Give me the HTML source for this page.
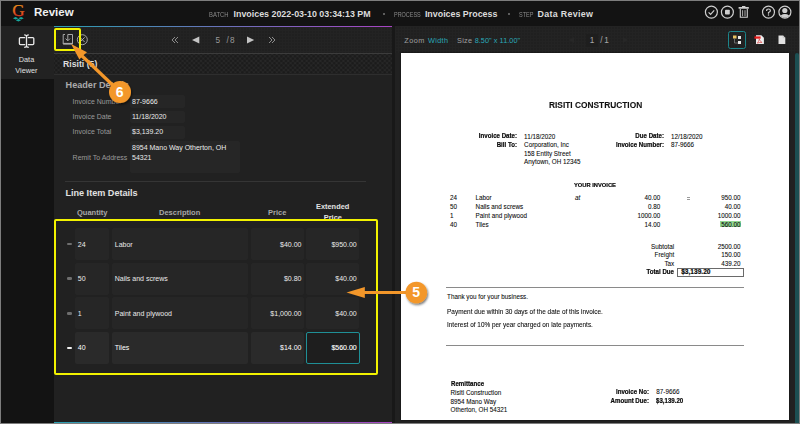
<!DOCTYPE html>
<html><head><meta charset="utf-8">
<style>
*{margin:0;padding:0;box-sizing:border-box}
html,body{width:800px;height:424px;overflow:hidden;background:#7d7d7d}
body{position:relative;font-family:"Liberation Sans",sans-serif}
.a{position:absolute}
.t{position:absolute;white-space:pre;line-height:1;transform-origin:0 0}
.b{font-weight:bold}
#top{left:1px;top:1px;width:798px;height:25px;background:#131313}
#side{left:1px;top:26px;width:53px;height:397px;background:#131313}
#sideitem{left:1px;top:26px;width:53px;height:53px;background:#222}
#lp{left:54px;top:26px;width:338px;height:397px;background:#212121}
#tb{left:54px;top:27px;width:338px;height:26px;background-color:#202020;
 background-image:linear-gradient(#232323 1px,transparent 1px),linear-gradient(90deg,#232323 1px,transparent 1px);background-size:3px 3px}
#sep{left:392px;top:26px;width:3px;height:397px;background:#181818}
#rp{left:395px;top:26px;width:404px;height:397px;background:#212121}
#rtb{left:395px;top:26px;width:404px;height:27px;background-color:#202020;
 background-image:linear-gradient(#232323 1px,transparent 1px),linear-gradient(90deg,#232323 1px,transparent 1px);background-size:3px 3px}
#page{left:401px;top:53px;width:388px;height:367px;background:#fff;box-shadow:0 0 1.5px #0a0a0a}
#scroll{left:795px;top:53px;width:4px;height:370px;background:#1c4f52;border-radius:2px 2px 0 0}
.grad{height:1px;background:linear-gradient(90deg,#2a9fb0,#a844c4)}
.dk{-webkit-text-stroke:0.12px #0a0a0a}
#chk{left:54px;top:54px;width:338px;height:20px;background-color:#292929;
 background-image:radial-gradient(circle,#1b1b1b 0.9px,transparent 1.9px),radial-gradient(circle,#1b1b1b 0.9px,transparent 1.9px);
 background-size:4.6px 4.6px;background-position:0 0,2.3px 2.3px}
.lbl{color:#9a9a9a;font-size:7px}
.val{color:#ebebeb;font-size:7px}
.box{position:absolute;background:#262626;border-radius:2px}
.cell{position:absolute;background:#262626;border-radius:2px;height:32px}
.hdl{position:absolute;width:5.5px;height:2.5px;border-radius:1.2px;background:#6e6e6e}
.d{color:#222;font-size:6.2px}
.db{color:#111;font-size:6.2px;font-weight:bold}
.sc{}
</style></head><body>
<div id="top" class="a"></div>
<div id="side" class="a"></div>
<div id="sideitem" class="a"></div>
<div id="lp" class="a"></div>
<div id="tb" class="a"></div>
<div class="a grad" style="left:54px;top:26px;width:338px"></div>
<div class="a" style="left:54px;top:53px;width:338px;height:1px;background:#3c3c3c"></div>
<div id="chk" class="a"></div>
<div class="a" style="left:54px;top:74px;width:338px;height:1px;background:#2e2e2e"></div>
<div class="a grad" style="left:54px;top:422px;width:338px"></div>
<div id="sep" class="a"></div>
<div id="rp" class="a"></div>
<div id="rtb" class="a"></div>
<div id="page" class="a"></div>
<div id="scroll" class="a"></div>

<!-- top bar -->
<svg class="a" style="left:10px;top:3px" width="18" height="21" viewBox="0 0 18 21">
 <defs><linearGradient id="gg" x1="0" y1="0" x2="0" y2="1"><stop offset="0.15" stop-color="#e8941c"/><stop offset="0.55" stop-color="#e4601e"/><stop offset="0.9" stop-color="#d8221e"/></linearGradient></defs>
 <text x="8.4" y="13.3" text-anchor="middle" font-family="Liberation Serif" font-size="17" fill="url(#gg)" stroke="url(#gg)" stroke-width="0.25">G</text>
 <path d="M2.9 15.3l2.7-1.3 2.7 1.3-2.7 1.3z M8.4 15.3l2.7-1.3 2.7 1.3-2.7 1.3z M5.7 17.2l2.7-1.3 2.7 1.3-2.7 1.3z" fill="#16a89f"/>
</svg>
<div class="t b" style="left:34px;top:7px;font-size:11.5px;color:#f0f0f0">Review</div>
<div class="t sc" style="left:208.5px;top:11.5px;font-size:6.6px;color:#8a8a8a;transform:scaleX(0.89)">BATCH</div>
<div class="t b" style="left:233.5px;top:9.5px;font-size:8.9px;color:#dcdcdc">Invoices 2022-03-10 03:34:13 PM</div>
<div class="a" style="left:383px;top:13px;width:2px;height:2px;background:#777;border-radius:1px"></div>
<div class="t sc" style="left:393.8px;top:11.5px;font-size:6.6px;color:#8a8a8a;transform:scaleX(0.83)">PROCESS</div>
<div class="t b" style="left:424.9px;top:9.5px;font-size:8.9px;color:#dcdcdc">Invoices Process</div>
<div class="a" style="left:508px;top:13px;width:2px;height:2px;background:#777;border-radius:1px"></div>
<div class="t sc" style="left:518.6px;top:11.5px;font-size:6.6px;color:#8a8a8a;transform:scaleX(0.84)">STEP</div>
<div class="t b" style="left:537.5px;top:9.5px;font-size:8.9px;letter-spacing:0.3px;color:#dcdcdc">Data Review</div>

<svg class="a" style="left:700px;top:2px" width="99" height="22" viewBox="0 0 99 22">
 <g fill="none" stroke="#cfcfcf" stroke-width="1.2">
  <circle cx="11.4" cy="10.1" r="6"/>
  <path d="M8.6 10.3l2 2 3.6-4"/>
  <circle cx="27.4" cy="10.1" r="6"/>
  <circle cx="68.5" cy="10.1" r="6"/>
  <circle cx="84.9" cy="10.1" r="6"/>
 </g>
 <rect x="25" y="7.7" width="4.8" height="4.8" rx="0.8" fill="#cfcfcf"/>
 <path d="M38.6 4.9h10.2v1.8h-10.2z M42 4.1h3.4v1h-3.4z" fill="#cfcfcf"/>
 <path d="M40.3 7v8.2h7V7" fill="none" stroke="#cfcfcf" stroke-width="1.1"/>
 <path d="M42.6 8.2v6 M45 8.2v6" stroke="#bdbdbd" stroke-width="0.9"/>
 <path d="M66.6 8.9Q66.6 7 68.5 7Q70.4 7 70.4 8.7Q70.4 9.7 68.5 10.5V11.7" fill="none" stroke="#cfcfcf" stroke-width="1.2"/>
 <circle cx="68.5" cy="13.1" r="0.75" fill="#cfcfcf"/>
 <circle cx="84.8" cy="8.5" r="2.6" fill="#cfcfcf"/>
 <clipPath id="uc"><circle cx="84.9" cy="10.1" r="5.6"/></clipPath>
 <ellipse cx="84.9" cy="16.6" rx="5.8" ry="4.5" fill="#cfcfcf" clip-path="url(#uc)"/>
</svg>

<!-- sidebar -->
<svg class="a" style="left:17px;top:33px" width="20" height="16" viewBox="0 0 20 16">
 <g fill="none" stroke="#eaeaea" stroke-width="1.3">
  <path d="M8.2 4.6H3.4Q2.4 4.6 2.4 5.6V10.6Q2.4 11.6 3.4 11.6H8.2"/>
  <path d="M10.8 4.6H15.8Q16.8 4.6 16.8 5.6V10.6Q16.8 11.6 15.8 11.6H10.8"/>
  <path d="M9.5 3v10.2 M7.2 1.8Q9.5 1.9 9.5 3.4Q9.5 1.9 11.8 1.8 M7.2 14.4Q9.5 14.3 9.5 12.8Q9.5 14.3 11.8 14.4"/>
 </g>
</svg>
<div class="t" style="left:18.8px;top:56px;font-size:7.3px;color:#e0e0e0">Data</div>
<div class="t" style="left:15.3px;top:66.5px;font-size:7.3px;color:#e0e0e0">Viewer</div>

<!-- left toolbar -->
<svg class="a" style="left:60px;top:32px" width="32" height="16" viewBox="0 0 32 16">
 <g fill="none" stroke="#a8a8a8" stroke-width="1">
  <path d="M5 2.5H3.2v9.5h9.3V2.5H7.8v6"/>
  <path d="M5.6 6.6l2.2 2.2 2.2-2.2"/>
  <path d="M3.2 11.6h9.3" stroke-width="1.4"/>
  <circle cx="22.3" cy="7.7" r="5"/>
  <path d="M20 5.4l4.6 4.6 M24.6 5.4l-4.6 4.6"/>
 </g>
</svg>
<div class="a" style="left:54px;top:28px;width:27px;height:23px;border:2px solid #f2f200;border-radius:2px"></div>
<svg class="a" style="left:168px;top:33px" width="112" height="14" viewBox="0 0 112 14">
 <g fill="none" stroke="#8c8c8c" stroke-width="1">
  <path d="M7 4l-3 3 3 3 M10 4l-3 3 3 3"/>
  <path d="M101 4l3 3-3 3 M104 4l3 3-3 3"/>
 </g>
 <path d="M24 7l7.3-3.4v6.8z" fill="#c4c4c4"/>
 <path d="M86.2 7l-7.2-3.4v6.8z" fill="#c4c4c4"/>
</svg>
<div class="t" style="left:215.5px;top:37px;font-size:8.2px;color:#9a9a9a">5</div><div class="t" style="left:226.5px;top:37px;font-size:8.2px;letter-spacing:1.2px;color:#9a9a9a">/8</div>

<div class="t b" style="left:63px;top:59.5px;font-size:8.7px;color:#dedede">Risiti (5)</div>
<div class="t b" style="left:65.6px;top:80.8px;font-size:9.1px;color:#ababab">Header Details</div>

<div class="t lbl" style="left:72.6px;top:98.3px">Invoice Number</div>
<div class="box" style="left:129.5px;top:95px;width:55px;height:12.5px"></div>
<div class="t val" style="left:132px;top:98px">87-9666</div>
<div class="t lbl" style="left:72.6px;top:113.0px">Invoice Date</div>
<div class="box" style="left:129.5px;top:110.5px;width:55px;height:12.5px"></div>
<div class="t val" style="left:132px;top:112.5px">11/18/2020</div>
<div class="t lbl" style="left:72.6px;top:128.0px">Invoice Total</div>
<div class="box" style="left:129.5px;top:126px;width:55px;height:12.5px"></div>
<div class="t val" style="left:132px;top:128.0px">$3,139.20</div>
<div class="t lbl" style="left:72.6px;top:154.0px">Remit To Address</div>
<div class="box" style="left:129.5px;top:141px;width:110.5px;height:31.5px"></div>
<div class="t val" style="left:132px;top:143.5px">8954 Mano Way Otherton, OH</div>
<div class="t val" style="left:132px;top:153.5px">54321</div>

<div class="a" style="left:65px;top:181px;width:301px;height:1px;background:#353535"></div>
<div class="t b" style="left:65.4px;top:188.5px;font-size:9.1px;color:#e2e2e2">Line Item Details</div>
<div class="t b" style="left:77px;top:208.5px;font-size:7.5px;color:#a8a8a8">Quantity</div>
<div class="t b" style="left:159px;top:208.5px;font-size:7.5px;color:#a8a8a8">Description</div>
<div class="t b" style="left:268px;top:208.5px;font-size:7.5px;color:#a8a8a8">Price</div>
<div class="t b" style="left:316px;top:202.5px;font-size:7.4px;color:#e2e2e2">Extended</div>
<div class="t b" style="left:323.8px;top:214px;font-size:7.4px;color:#e2e2e2">Price</div>

<!-- rows -->
<div class="hdl" style="left:66.8px;top:242.6px"></div>
<div class="cell" style="left:75px;top:228px;width:34px"></div>
<div class="cell" style="left:112px;top:228px;width:136px"></div>
<div class="cell" style="left:251px;top:228px;width:53px"></div>
<div class="cell" style="left:306px;top:228px;width:53px"></div>
<div class="t val" style="left:77.8px;top:240.8px">24</div>
<div class="t val" style="left:114.8px;top:240.8px">Labor</div>
<div class="t val" style="left:250px;top:240.8px;width:51.5px;text-align:right">$40.00</div>
<div class="t val" style="left:300px;top:240.8px;width:56.7px;text-align:right">$950.00</div>

<div class="hdl" style="left:66.8px;top:277.3px"></div>
<div class="cell" style="left:75px;top:262.5px;width:34px"></div>
<div class="cell" style="left:112px;top:262.5px;width:136px"></div>
<div class="cell" style="left:251px;top:262.5px;width:53px"></div>
<div class="cell" style="left:306px;top:262.5px;width:53px"></div>
<div class="t val" style="left:77.8px;top:275.3px">50</div>
<div class="t val" style="left:114.8px;top:275.3px">Nails and screws</div>
<div class="t val" style="left:250px;top:275.3px;width:51.5px;text-align:right">$0.80</div>
<div class="t val" style="left:300px;top:275.3px;width:56.7px;text-align:right">$40.00</div>

<div class="hdl" style="left:66.8px;top:312px"></div>
<div class="cell" style="left:75px;top:297.3px;width:34px"></div>
<div class="cell" style="left:112px;top:297.3px;width:136px"></div>
<div class="cell" style="left:251px;top:297.3px;width:53px"></div>
<div class="cell" style="left:306px;top:297.3px;width:53px"></div>
<div class="t val" style="left:77.8px;top:309.8px">1</div>
<div class="t val" style="left:114.8px;top:309.8px">Paint and plywood</div>
<div class="t val" style="left:250px;top:309.8px;width:51.5px;text-align:right">$1,000.00</div>
<div class="t val" style="left:300px;top:309.8px;width:56.7px;text-align:right">$40.00</div>

<div class="hdl" style="left:66.8px;top:346.5px;background:#f0f0f0"></div>
<div class="cell" style="left:75px;top:331.5px;width:34px;background:#2a2a2a"></div>
<div class="cell" style="left:112px;top:331.5px;width:136px;background:#2a2a2a"></div>
<div class="cell" style="left:251px;top:331.5px;width:53px;background:#2a2a2a"></div>
<div class="cell" style="left:306px;top:331.5px;width:54px;background:#1e1e1e;border:1px solid #1f8f96"></div>
<div class="t val" style="left:77.8px;top:344.3px;color:#fff">40</div>
<div class="t val" style="left:114.8px;top:344.3px;color:#fff">Tiles</div>
<div class="t val" style="left:250px;top:344.3px;width:51.5px;text-align:right;color:#fff">$14.00</div>
<div class="t val" style="left:300px;top:344.3px;width:56.7px;text-align:right;color:#fff;-webkit-text-stroke:0.12px #fff">$560.00</div>

<div class="a" style="left:54px;top:219px;width:324px;height:156px;border:2px solid #f2f200;border-radius:2px"></div>

<!-- right toolbar -->
<div class="t" style="left:404.2px;top:37px;font-size:7.3px;letter-spacing:0.5px;color:#a0a0a0">Zoom</div>
<div class="t" style="left:428.1px;top:37px;font-size:7.3px;letter-spacing:0.3px;color:#2aa8b8">Width</div>
<div class="t" style="left:457px;top:37px;font-size:7.3px;letter-spacing:0.3px;color:#a0a0a0">Size</div>
<div class="t" style="left:474.7px;top:37px;font-size:7.3px;letter-spacing:0.05px;color:#2aa8b8">8.50" x 11.00"</div>
<div class="a" style="left:586px;top:34px;width:11.5px;height:13px;background:#1e1e1e"></div><svg class="a" style="left:566px;top:36px" width="66" height="8" viewBox="0 0 66 8"><path d="M8 1L3 4l5 3z M57 1l5 3-5 3z" fill="#272727"/></svg>
<div class="t" style="left:589.8px;top:37.2px;font-size:8.2px;color:#a8a8a8">1</div>
<div class="t" style="left:600.3px;top:37.2px;font-size:8.2px;letter-spacing:1.8px;color:#a8a8a8">/1</div>
<div class="a" style="left:728px;top:31px;width:18px;height:18px;border:1px solid #1c868c;border-radius:2.5px"></div>
<svg class="a" style="left:730px;top:33px" width="64" height="14" viewBox="0 0 64 14">
 <rect x="3" y="2.5" width="3.5" height="3" fill="#e8c060"/>
 <path d="M4.5 5.5v4.5h3.5" stroke="#888" stroke-width="0.7" fill="none"/>
 <rect x="8" y="3" width="3" height="3" fill="#e8e8e8"/>
 <rect x="8" y="8" width="3" height="3" fill="#e8e8e8"/>
 <path d="M26 2.2h5.3l2.6 2.6v6.2h-7.9z" fill="#eeeeee"/>
 <path d="M24.4 3.4h6.2v2.3h-6.2z" fill="#e81c1c"/>
 <path d="M27.3 10.2q1.4-1.6 2-4.2q0.4 2.4 2.8 3.4q-2.6-0.2-4.8 0.8z" stroke="#d42020" stroke-width="0.55" fill="none"/>
 <path d="M48.5 2.5h4.6l2.2 2.2v6.3h-6.8z" fill="#e2e2e2"/>
 <path d="M53.1 2.5v2.2h2.2" fill="none" stroke="#aaa" stroke-width="0.4"/>
</svg>
<!-- document -->
<div class="t" style="left:548.7px;top:101.44px;font-size:8.9px;color:#111;font-weight:bold;-webkit-text-stroke:0.1px #111;transform:scaleX(0.94);">RISITI CONSTRUCTION</div>
<div class="t" style="left:317.1px;width:200px;text-align:right;transform-origin:100% 0;top:133.29px;font-size:6.6px;color:#0a0a0a;font-weight:bold;-webkit-text-stroke:0.2px #0a0a0a;transform:scaleX(0.93);">Invoice Date:</div>
<div class="t" style="left:524.1px;top:133.55px;font-size:6.3px;color:#0a0a0a;-webkit-text-stroke:0.07px #0a0a0a;">11/18/2020</div>
<div class="t" style="left:317.1px;width:200px;text-align:right;transform-origin:100% 0;top:141.89px;font-size:6.6px;color:#0a0a0a;font-weight:bold;-webkit-text-stroke:0.2px #0a0a0a;transform:scaleX(0.93);">Bill To:</div>
<div class="t" style="left:524.1px;top:142.15px;font-size:6.3px;color:#0a0a0a;-webkit-text-stroke:0.07px #0a0a0a;">Corporation, Inc</div>
<div class="t" style="left:524.1px;top:151.15px;font-size:6.3px;color:#0a0a0a;-webkit-text-stroke:0.07px #0a0a0a;">158 Entity Street</div>
<div class="t" style="left:524.1px;top:159.25px;font-size:6.3px;color:#0a0a0a;-webkit-text-stroke:0.07px #0a0a0a;">Anytown, OH 12345</div>
<div class="t" style="left:463.7px;width:200px;text-align:right;transform-origin:100% 0;top:133.29px;font-size:6.6px;color:#0a0a0a;font-weight:bold;-webkit-text-stroke:0.2px #0a0a0a;transform:scaleX(0.93);">Due Date:</div>
<div class="t" style="left:671.0px;top:133.55px;font-size:6.3px;color:#0a0a0a;-webkit-text-stroke:0.07px #0a0a0a;">12/18/2020</div>
<div class="t" style="left:463.7px;width:200px;text-align:right;transform-origin:100% 0;top:141.89px;font-size:6.6px;color:#0a0a0a;font-weight:bold;-webkit-text-stroke:0.2px #0a0a0a;transform:scaleX(0.93);">Invoice Number:</div>
<div class="t" style="left:671.0px;top:142.15px;font-size:6.3px;color:#0a0a0a;-webkit-text-stroke:0.07px #0a0a0a;">87-9666</div>
<div class="t" style="left:574.3px;top:182.03px;font-size:6.2px;color:#0a0a0a;font-weight:bold;-webkit-text-stroke:0.2px #0a0a0a;transform:scaleX(0.93);">YOUR INVOICE</div>
<div class="a" style="left:720.1px;top:220.9px;width:20.7px;height:6.1px;background:#92d892"></div>
<div class="t" style="left:450.1px;top:195.44px;font-size:6.3px;color:#0a0a0a;-webkit-text-stroke:0.07px #0a0a0a;">24</div>
<div class="t" style="left:475.6px;top:195.44px;font-size:6.3px;color:#0a0a0a;-webkit-text-stroke:0.07px #0a0a0a;">Labor</div>
<div class="t" style="left:460.2px;width:200px;text-align:right;transform-origin:100% 0;top:195.44px;font-size:6.3px;color:#0a0a0a;-webkit-text-stroke:0.07px #0a0a0a;">40.00</div>
<div class="t" style="left:540.4px;width:200px;text-align:right;transform-origin:100% 0;top:195.44px;font-size:6.3px;color:#0a0a0a;-webkit-text-stroke:0.07px #0a0a0a;">950.00</div>
<div class="t" style="left:450.1px;top:204.15px;font-size:6.3px;color:#0a0a0a;-webkit-text-stroke:0.07px #0a0a0a;">50</div>
<div class="t" style="left:475.6px;top:204.15px;font-size:6.3px;color:#0a0a0a;-webkit-text-stroke:0.07px #0a0a0a;">Nails and screws</div>
<div class="t" style="left:460.2px;width:200px;text-align:right;transform-origin:100% 0;top:204.15px;font-size:6.3px;color:#0a0a0a;-webkit-text-stroke:0.07px #0a0a0a;">0.80</div>
<div class="t" style="left:540.4px;width:200px;text-align:right;transform-origin:100% 0;top:204.15px;font-size:6.3px;color:#0a0a0a;-webkit-text-stroke:0.07px #0a0a0a;">40.00</div>
<div class="t" style="left:450.1px;top:212.84px;font-size:6.3px;color:#0a0a0a;-webkit-text-stroke:0.07px #0a0a0a;">1</div>
<div class="t" style="left:475.6px;top:212.84px;font-size:6.3px;color:#0a0a0a;-webkit-text-stroke:0.07px #0a0a0a;">Paint and plywood</div>
<div class="t" style="left:460.2px;width:200px;text-align:right;transform-origin:100% 0;top:212.84px;font-size:6.3px;color:#0a0a0a;-webkit-text-stroke:0.07px #0a0a0a;">1000.00</div>
<div class="t" style="left:540.4px;width:200px;text-align:right;transform-origin:100% 0;top:212.84px;font-size:6.3px;color:#0a0a0a;-webkit-text-stroke:0.07px #0a0a0a;">1000.00</div>
<div class="t" style="left:450.1px;top:221.55px;font-size:6.3px;color:#0a0a0a;-webkit-text-stroke:0.07px #0a0a0a;">40</div>
<div class="t" style="left:475.6px;top:221.55px;font-size:6.3px;color:#0a0a0a;-webkit-text-stroke:0.07px #0a0a0a;">Tiles</div>
<div class="t" style="left:460.2px;width:200px;text-align:right;transform-origin:100% 0;top:221.55px;font-size:6.3px;color:#0a0a0a;-webkit-text-stroke:0.07px #0a0a0a;">14.00</div>
<div class="t" style="left:540.4px;width:200px;text-align:right;transform-origin:100% 0;top:221.55px;font-size:6.3px;color:#0a0a0a;-webkit-text-stroke:0.07px #0a0a0a;">560.00</div>
<div class="t" style="left:575.0px;top:195.44px;font-size:6.3px;color:#0a0a0a;font-style:italic;-webkit-text-stroke:0.07px #0a0a0a;">at</div>
<div class="a" style="left:687.3px;top:197.3px;width:3.2px;height:0.7px;background:#9a9a9a"></div><div class="a" style="left:687.3px;top:198.9px;width:3.2px;height:0.7px;background:#9a9a9a"></div>
<div class="t" style="left:474.2px;width:200px;text-align:right;transform-origin:100% 0;top:243.84px;font-size:6.3px;color:#0a0a0a;-webkit-text-stroke:0.07px #0a0a0a;">Subtotal</div>
<div class="t" style="left:540.4px;width:200px;text-align:right;transform-origin:100% 0;top:243.84px;font-size:6.3px;color:#0a0a0a;-webkit-text-stroke:0.07px #0a0a0a;">2500.00</div>
<div class="t" style="left:474.2px;width:200px;text-align:right;transform-origin:100% 0;top:252.45px;font-size:6.3px;color:#0a0a0a;-webkit-text-stroke:0.07px #0a0a0a;">Freight</div>
<div class="t" style="left:540.4px;width:200px;text-align:right;transform-origin:100% 0;top:252.45px;font-size:6.3px;color:#0a0a0a;-webkit-text-stroke:0.07px #0a0a0a;">150.00</div>
<div class="t" style="left:474.2px;width:200px;text-align:right;transform-origin:100% 0;top:260.75px;font-size:6.3px;color:#0a0a0a;-webkit-text-stroke:0.07px #0a0a0a;">Tax</div>
<div class="t" style="left:540.4px;width:200px;text-align:right;transform-origin:100% 0;top:260.75px;font-size:6.3px;color:#0a0a0a;-webkit-text-stroke:0.07px #0a0a0a;">439.20</div>
<div class="t" style="left:474.2px;width:200px;text-align:right;transform-origin:100% 0;top:269.39px;font-size:6.6px;color:#0a0a0a;font-weight:bold;-webkit-text-stroke:0.2px #0a0a0a;transform:scaleX(0.93);">Total Due</div>
<div class="a" style="left:677.4px;top:268.4px;width:66.5px;height:8.6px;border:1px solid #6a6a6a"></div>
<div class="t" style="left:681.2px;top:269.39px;font-size:6.6px;color:#0a0a0a;font-weight:bold;-webkit-text-stroke:0.2px #0a0a0a;">$3,139.20</div>
<div class="a" style="left:446px;top:287px;width:298px;height:1px;background:#8a8a8a"></div>
<div class="a" style="left:446px;top:345px;width:298px;height:1px;background:#8a8a8a"></div>
<div class="t" style="left:447.1px;top:294.44px;font-size:6.3px;color:#0a0a0a;-webkit-text-stroke:0.07px #0a0a0a;">Thank you for your business.</div>
<div class="t" style="left:447.1px;top:308.55px;font-size:6.3px;color:#0a0a0a;-webkit-text-stroke:0.07px #0a0a0a;transform:scaleX(1.026);">Payment due within 30 days of the date of this invoice.</div>
<div class="t" style="left:447.1px;top:322.35px;font-size:6.3px;color:#0a0a0a;-webkit-text-stroke:0.07px #0a0a0a;transform:scaleX(1.019);">Interest of 10% per year charged on late payments.</div>
<div class="t" style="left:450.5px;top:380.74px;font-size:6.6px;color:#0a0a0a;font-weight:bold;-webkit-text-stroke:0.2px #0a0a0a;transform:scaleX(0.93);">Remittance</div>
<div class="t" style="left:450.5px;top:389.75px;font-size:6.3px;color:#0a0a0a;-webkit-text-stroke:0.07px #0a0a0a;">Risiti Construction</div>
<div class="t" style="left:450.5px;top:398.50px;font-size:6.3px;color:#0a0a0a;-webkit-text-stroke:0.07px #0a0a0a;">8954 Mano Way</div>
<div class="t" style="left:450.5px;top:406.55px;font-size:6.3px;color:#0a0a0a;-webkit-text-stroke:0.07px #0a0a0a;">Otherton, OH 54321</div>
<div class="t" style="left:449.3px;width:200px;text-align:right;transform-origin:100% 0;top:388.79px;font-size:6.6px;color:#0a0a0a;font-weight:bold;-webkit-text-stroke:0.2px #0a0a0a;transform:scaleX(0.93);">Invoice No:</div>
<div class="t" style="left:656.3px;top:389.05px;font-size:6.3px;color:#0a0a0a;-webkit-text-stroke:0.07px #0a0a0a;">87-9666</div>
<div class="t" style="left:449.3px;width:200px;text-align:right;transform-origin:100% 0;top:397.54px;font-size:6.6px;color:#0a0a0a;font-weight:bold;-webkit-text-stroke:0.2px #0a0a0a;transform:scaleX(0.93);">Amount Due:</div>
<div class="t" style="left:656.3px;top:397.54px;font-size:6.6px;color:#0a0a0a;font-weight:bold;-webkit-text-stroke:0.2px #0a0a0a;transform:scaleX(0.93);">$3,139.20</div>
<!-- annotations -->
<svg class="a" style="left:0;top:0" width="800" height="424" viewBox="0 0 800 424">
 <defs><filter id="sh" x="-50%" y="-50%" width="200%" height="200%"><feDropShadow dx="1" dy="1.6" stdDeviation="1.1" flood-color="#000" flood-opacity="0.55"/></filter></defs>
 <g fill="#f3972a">
  <path d="M120 92L80.5 54.5" stroke="#f3972a" stroke-width="3.2"/>
  <path d="M71.1 44L87 52.3L83 55.4L79.4 59.4Z"/>
  <path d="M406 292.5H363" stroke="#f3972a" stroke-width="3.2"/>
  <path d="M346.5 292.5L364.8 287L364.8 298Z"/>
  <circle cx="120" cy="92" r="11" filter="url(#sh)"/>
  <circle cx="416.3" cy="292.5" r="10.8" filter="url(#sh)"/>
 </g>
 <text x="119.7" y="96.9" text-anchor="middle" font-family="Liberation Sans" font-weight="bold" font-size="14" fill="#fff">6</text>
 <text x="416.2" y="296.9" text-anchor="middle" font-family="Liberation Sans" font-weight="bold" font-size="14" fill="#fff">5</text>
</svg>
</body></html>
